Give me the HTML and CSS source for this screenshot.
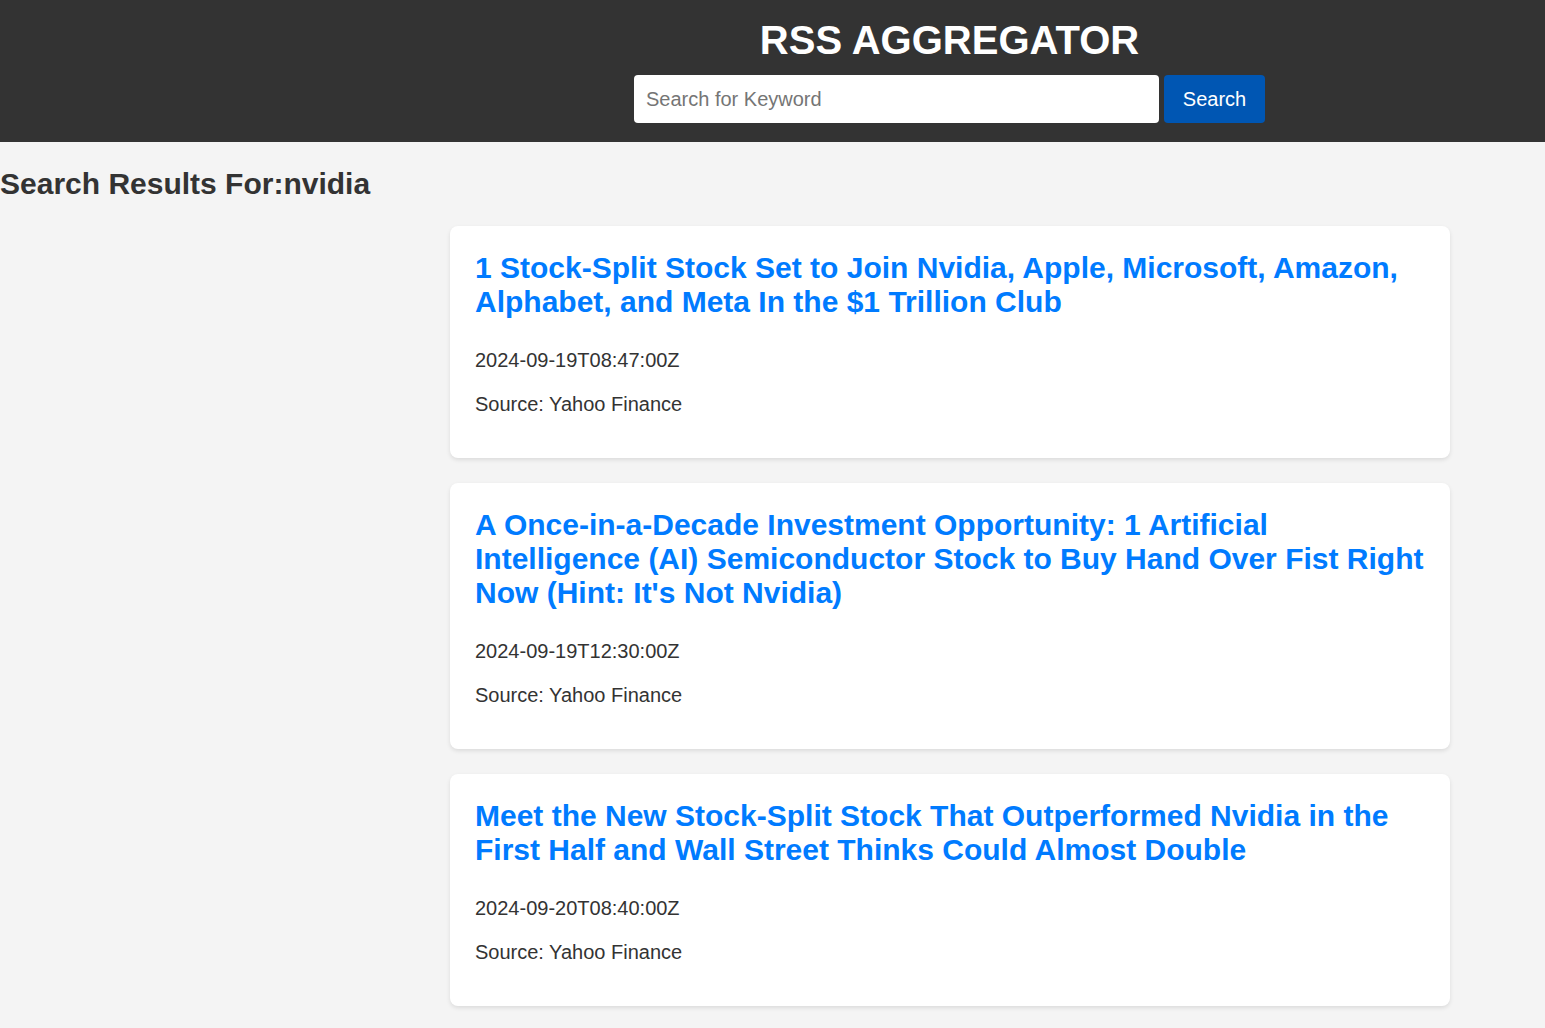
FILE: index.html
```html
<!DOCTYPE html>
<html lang="en">
<head>
<meta charset="utf-8">
<title>RSS Aggregator</title>
<link rel="stylesheet" href="styles.css">
</head>
<body>
<header class="site-header">
  <div class="header-inner">
    <h1 class="site-title">RSS AGGREGATOR</h1>
    <form class="search-form">
      <input class="search-input" type="text" placeholder="Search for Keyword">
      <button class="search-button" type="button">Search</button>
    </form>
  </div>
</header>
<main class="content">
  <h2 class="results-heading">Search Results For:nvidia</h2>
  <div class="results">
    <article class="card">
      <h3 class="card-title"><a href="#">1 Stock-Split Stock Set to Join Nvidia, Apple, Microsoft, Amazon, Alphabet, and Meta In the $1 Trillion Club</a></h3>
      <p class="card-meta">2024-09-19T08:47:00Z</p>
      <p class="card-meta">Source: Yahoo Finance</p>
    </article>
    <article class="card">
      <h3 class="card-title"><a href="#">A Once-in-a-Decade Investment Opportunity: 1 Artificial Intelligence (AI) Semiconductor Stock to Buy Hand Over Fist Right Now (Hint: It's Not Nvidia)</a></h3>
      <p class="card-meta">2024-09-19T12:30:00Z</p>
      <p class="card-meta">Source: Yahoo Finance</p>
    </article>
    <article class="card">
      <h3 class="card-title"><a href="#">Meet the New Stock-Split Stock That Outperformed Nvidia in the First Half and Wall Street Thinks Could Almost Double</a></h3>
      <p class="card-meta">2024-09-20T08:40:00Z</p>
      <p class="card-meta">Source: Yahoo Finance</p>
    </article>
  </div>
</main>
</body>
</html>
```
FILE: styles.css
```css
html, body {
  margin: 0;
  padding: 0;
}
body {
  background: #f4f4f4;
  font-family: "Liberation Sans", Arial, sans-serif;
  color: #333;
}
.site-header {
  background: #333;
  padding: 17px 0 19px 354px;
}
.header-inner {
  display: flex;
  flex-direction: column;
  align-items: center;
}
.site-title {
  margin: 0 0 12px;
  font-size: 40px;
  font-weight: bold;
  color: #fff;
  line-height: 46px;
}
.search-form {
  display: flex;
  gap: 5px;
}
.search-input {
  width: 525px;
  height: 48px;
  box-sizing: border-box;
  border: none;
  border-radius: 4px;
  padding: 0 12px;
  font-family: "Liberation Sans", Arial, sans-serif;
  font-size: 20px;
  color: #333;
  background: #fff;
  outline: none;
}
.search-input::placeholder {
  color: #757575;
}
.search-button {
  width: 101px;
  height: 48px;
  border: none;
  border-radius: 4px;
  background: #0056b3;
  color: #fff;
  font-family: "Liberation Sans", Arial, sans-serif;
  font-size: 20px;
  padding: 0;
}
.content {
  padding: 25px 0 20px;
}
.results-heading {
  margin: 0 0 25px;
  font-size: 30px;
  line-height: 34px;
  font-weight: bold;
  color: #333;
}
.results {
  margin-left: 450px;
  width: 1000px;
  display: flex;
  flex-direction: column;
  gap: 25px;
}
.card {
  background: #fff;
  border-radius: 8px;
  box-shadow: 0 2px 4px rgba(0, 0, 0, 0.1);
  padding: 25px;
}
.card-title {
  margin: 0 0 30px;
  font-size: 30px;
  line-height: 34px;
  font-weight: bold;
}
.card-title a {
  color: #007bff;
  text-decoration: none;
}
.card-meta {
  margin: 0 0 21px;
  font-size: 20px;
  line-height: 23px;
  color: #333;
}
.card-meta:last-child {
  margin-bottom: 17px;
}
```
